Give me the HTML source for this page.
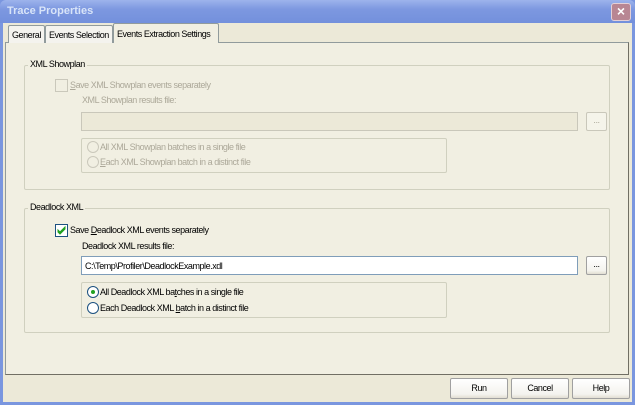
<!DOCTYPE html>
<html><head><meta charset="utf-8"><style>
*{margin:0;padding:0;box-sizing:border-box}
body{width:635px;height:405px;overflow:hidden;background:#7a96df;font-family:"Liberation Sans",sans-serif;font-size:9px;letter-spacing:-0.45px;color:#000;position:relative}
.a{position:absolute;white-space:nowrap}
.title{left:0;top:0;width:635px;height:23px;background:linear-gradient(#9db3ec,#7d98e0 40%,#7390dc);border-radius:6px 6px 0 0}
.title span{position:absolute;left:7px;top:5px;color:#d8e4f8;font-weight:bold;font-size:11px;letter-spacing:0}
.close{left:611px;top:3px;width:20px;height:18px;background:#b88693;border:1px solid #e4d0d6;border-radius:3px;color:#fff;font-weight:bold;text-align:center;line-height:15px;font-size:14px;letter-spacing:0}
.client{left:3px;top:23px;width:629px;height:379px;background:#ece9d8}
.tab{height:18px;border:1px solid #919b9c;border-bottom:none;background:#f4f3ee;padding:4px 3px 0;border-radius:2px 2px 0 0}
.panel{left:5px;top:42px;width:624px;height:333px;background:#f1efe2;border:1px solid #919b9c;border-right-color:#716f64;border-bottom-color:#716f64}
.grp{border:1px solid #d0d0bf;border-radius:2px}
.lbl{background:#f1efe2;padding:0 2px}
.dis{color:#aca899}
.tb{border:1px solid #7f9db9;background:#fff;height:19px;padding:4px 3px}
.tb.d{background:#ece9d8;border-color:#c9c7ba}
.btn{border:1px solid #a0a0a0;border-radius:2px;background:linear-gradient(#fff,#f4f3ee 80%,#e2ded2);text-align:center;line-height:19px}
.btn.d{color:#aca899;background:#f5f4ea;border-color:#c9c7ba}
.cb{width:13px;height:13px;border:1px solid #1c5180;background:#fff}
.rd{width:12px;height:12px;border:1px solid #1c5180;border-radius:50%;background:#fff}
.rd.d,.cb.d{border-color:#cac8bb;background:#f1efe2}
</style></head><body>
<div class="a title"><span>Trace Properties</span></div>
<div class="a close">×</div>
<div class="a client"></div>
<div class="a panel"></div>
<div class="a tab" style="left:8px;top:25px;width:37px">General</div>
<div class="a tab" style="left:45px;top:25px;width:68px">Events Selection</div>
<div class="a tab" style="left:113px;top:23px;width:106px;height:20px;background:#f1efe2;padding-top:5px">Events Extraction Settings</div>

<div class="a grp" style="left:24px;top:65px;width:586px;height:125px"></div>
<div class="a lbl" style="left:28px;top:59px">XML Showplan</div>
<div class="a cb d" style="left:55px;top:79px"></div>
<div class="a dis" style="left:70px;top:80px"><u>S</u>ave XML Showplan events separately</div>
<div class="a dis" style="left:82px;top:95px">XML Showplan results file:</div>
<div class="a tb d" style="left:81px;top:112px;width:497px"></div>
<div class="a btn d" style="left:586px;top:112px;width:21px;height:19px;line-height:15px">...</div>
<div class="a grp" style="left:81px;top:138px;width:366px;height:35px;background:#f1efe2"></div>
<div class="a rd d" style="left:87px;top:141px"></div>
<div class="a dis" style="left:100px;top:142px">All XML Showplan batches in a single file</div>
<div class="a rd d" style="left:87px;top:156px"></div>
<div class="a dis" style="left:100px;top:157px"><u>E</u>ach XML Showplan batch in a distinct file</div>

<div class="a grp" style="left:24px;top:208px;width:586px;height:125px"></div>
<div class="a lbl" style="left:28px;top:202px">Deadlock XML</div>
<div class="a cb" style="left:55px;top:224px"><svg width="11" height="11" style="position:absolute;left:0;top:0"><path d="M2 5l2 2 5-5v2l-5 5-2-2z" fill="#21a121" stroke="#21a121" stroke-width="1"/></svg></div>
<div class="a" style="left:70px;top:225px">Save <u>D</u>eadlock XML events separately</div>
<div class="a" style="left:82px;top:241px">Deadlock XML results file:</div>
<div class="a tb" style="left:81px;top:256px;width:497px">C:\Temp\Profiler\DeadlockExample.xdl</div>
<div class="a btn" style="left:586px;top:256px;width:21px;height:19px;line-height:15px">...</div>
<div class="a grp" style="left:81px;top:282px;width:366px;height:36px;background:#f1efe2"></div>
<div class="a rd" style="left:87px;top:286px"><div class="a" style="left:3px;top:3px;width:4px;height:4px;border-radius:50%;background:#21a121"></div></div>
<div class="a" style="left:100px;top:287px">All Deadlock XML ba<u>t</u>ches in a single file</div>
<div class="a rd" style="left:87px;top:302px"></div>
<div class="a" style="left:100px;top:303px">Each Deadlock XML <u>b</u>atch in a distinct file</div>

<div class="a btn" style="left:450px;top:378px;width:58px;height:21px">Run</div>
<div class="a btn" style="left:511px;top:378px;width:58px;height:21px">Cancel</div>
<div class="a btn" style="left:572px;top:378px;width:58px;height:21px">Help</div>
</body></html>
